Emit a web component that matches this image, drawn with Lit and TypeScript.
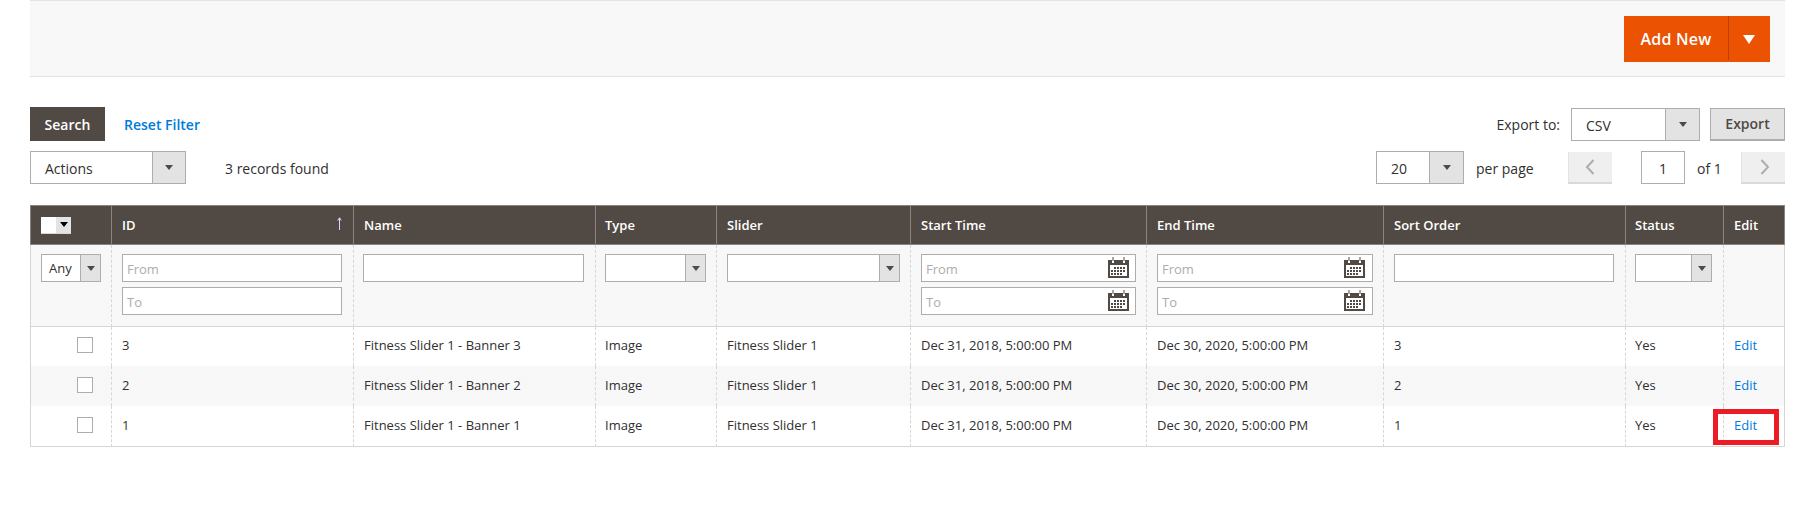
import { LitElement, html, css } from "lit";
import { customElement } from "lit/decorators.js";

const rows = [
  { id: "3", name: "Fitness Slider 1 - Banner 3" },
  { id: "2", name: "Fitness Slider 1 - Banner 2" },
  { id: "1", name: "Fitness Slider 1 - Banner 1" },
];
const colWidths = [81, 242, 242, 121, 194, 236, 237, 242, 98, 62];
const heads = ["", "ID", "Name", "Type", "Slider", "Start Time", "End Time", "Sort Order", "Status", "Edit"];

const sel = (text: string, extra = "") => html`
  <div class="sel ${extra}">
    <span class="sel-val">${text}</span>
    <span class="sel-btn"><i class="tri"></i></span>
  </div>`;

const cal = html`<svg class="cal" viewBox="0 0 21 21" width="21" height="21" aria-hidden="true">
  <path fill="#514943" d="M0 3h21v18H0z" />
  <path fill="#fff" d="M2 8h17v11H2z" />
  <path fill="#fff" d="M4 1h2v5H4zM15 1h2v5h-2z" />
  <path fill="none" stroke="#514943" stroke-width="1" d="M5 0v4M16 0v4" />
  <path fill="#514943" d="M6 10h2v2H6zM9 10h2v2H9zM12 10h2v2h-2zM15 10h2v2h-2zM3 13h2v2H3zM6 13h2v2H6zM9 13h2v2H9zM12 13h2v2h-2zM15 13h2v2h-2zM3 16h2v2H3zM6 16h2v2H6zM9 16h2v2H9zM12 16h2v2h-2z" />
</svg>`;

const dateInput = (ph: string) => html`
  <div class="date"><input class="inp" placeholder=${ph} />${cal}</div>`;

@customElement("app-root")
export class AppRoot extends LitElement {
  static styles = css`
    :host {
      display: block;
      box-sizing: border-box;
      width: 1815px;
      height: 507px;
      padding: 0 30px;
      background: #fff;
      font-family: "Open Sans", sans-serif;
      font-size: 14px;
      color: #303030;
      overflow: hidden;
    }
    * { box-sizing: border-box; }
    .dither {
      background: repeating-conic-gradient(#f6f6f6 0 25%, #f9f9f9 0 50%) 0 0 / 2px 2px;
    }
    .topbar {
      height: 77px;
      border-top: 1px solid #e3e3e3;
      border-bottom: 1px solid #e3e3e3;
      display: flex;
      justify-content: flex-end;
      align-items: flex-start;
      padding: 15px 15px 0 0;
    }
    .add {
      width: 146px;
      height: 46px;
      background: #eb5202;
      color: #fff;
      display: flex;
      align-items: center;
      font-size: 16px;
      font-weight: 600;
    }
    .add-label { width: 104px; text-align: center; letter-spacing: 0.25px; }
    .add-split {
      flex: 1;
      align-self: stretch;
      display: flex;
      align-items: center;
      justify-content: center;
      position: relative;
    }
    .add-split::before {
      content: "";
      position: absolute;
      left: 0; top: 0; bottom: 2px;
      width: 1px;
      background: #b84002;
    }
    .add-tri {
      width: 0; height: 0;
      border-left: 6px solid transparent;
      border-right: 6px solid transparent;
      border-top: 9px solid #fff;
    }
    .bar {
      display: flex;
      align-items: center;
      justify-content: space-between;
    }
    .bar1 { margin-top: 30px; height: 34px; }
    .bar2 { margin-top: 10px; height: 33px; }
    .group { display: flex; align-items: center; }
    .search {
      width: 75px; height: 34px;
      background: #514943;
      color: #fff;
      font-weight: 600;
      display: flex; align-items: center; justify-content: center;
    }
    .reset { margin-left: 19px; color: #007bdb; font-weight: 600; }
    .sel {
      display: flex;
      height: 28px;
      background: #fff;
      border: 1px solid #adadad;
      font-size: 13px;
      width: 100%;
    }
    .sel-val { flex: 1; min-width: 0; padding-left: 7px; line-height: 27px; }
    .sel-btn {
      width: 20px;
      background: #e3e3e3;
      border-left: 1px solid #adadad;
      display: flex; align-items: center; justify-content: center;
    }
    .tri {
      width: 0; height: 0;
      border-left: 4px solid transparent;
      border-right: 4px solid transparent;
      border-top: 5px solid #514943;
    }
    .big { height: 33px; font-size: 14px; }
    .big .sel-val { padding-left: 14px; line-height: 33px; }
    .big .sel-btn { width: 33px; }
    .w-actions { width: 156px; }
    .w-csv { width: 129px; margin-left: 11px; }
    .w-20 { width: 88px; }
    .big.w-20 .sel-btn, .big.w-csv .sel-btn { width: 34px; }
    .found { margin-left: 39px; padding-top: 1px; }
    .export {
      width: 75px; height: 33px;
      margin-left: 10px;
      background: #e3e3e3;
      border: 1px solid #adadad;
      border-bottom-width: 2px;
      font-weight: 600;
      color: #514943;
      display: flex; align-items: center; justify-content: center;
    }
    .perpage { margin-left: 12px; width: 92px; padding-top: 1px; }
    .pg {
      width: 44px; height: 32px;
      margin-top: 1px;
      background: #efefef;
      border-left: 1px solid #e3e3e3;
      border-bottom: 2px solid #d9d9d9;
      display: flex; align-items: center; justify-content: center;
    }
    .pg-prev svg { margin-right: 2px; }
    .pg-next svg { margin-left: 3px; }
    .pg-num {
      width: 44px; height: 33px;
      margin-left: 29px;
      padding-top: 1px;
      border: 1px solid #adadad;
      display: flex; align-items: center; justify-content: center;
    }
    .of { margin-left: 12px; width: 44px; padding-top: 1px; }
    table {
      margin-top: 21px;
      width: 1755px;
      table-layout: fixed;
      border-collapse: separate;
      border-spacing: 0;
      font-size: 13px;
    }
    th {
      height: 40px;
      padding: 0 0 0 10px;
      background: #514943;
      color: #fff;
      text-align: left;
      font-weight: 600;
      border-top: 1px solid #8a837f;
      border-left: 1px solid #8a837f;
      border-bottom: 1px solid #8a837f;
      position: relative;
    }
    th:last-child { border-right: 1px solid #8a837f; }
    th:nth-child(4), th:nth-child(9) { padding-left: 9px; }
    .sort {
      position: absolute;
      right: 11px; top: 11px;
    }
    .hcheck {
      display: flex;
      width: 30px; height: 17px;
      border-bottom: 1px solid #d6d6d6;
    }
    .hcheck-box { width: 15px; background: #fff; }
    .hcheck-btn {
      flex: 1;
      background: #e3e3e3;
      display: flex; align-items: center; justify-content: center;
    }
    .hcheck-btn .tri { border-top-color: #000; border-left-width: 4.5px; border-right-width: 4.5px; }
    .filters td {
      height: 82px;
      vertical-align: top;
      padding: 9px 10px 0 10px;
      border-left: 1px dashed #d6d6d6;
      border-bottom: 1px solid #d6d6d6;
    }
    .filters td:first-child { border-left: 1px solid #d6d6d6; }
    .filters td:last-child { border-right: 1px solid #d6d6d6; }
    .filters td:nth-child(2), .filters td:nth-child(8) { padding-right: 11px; }
    .filters td:nth-child(3), .filters td:nth-child(9) { padding-left: 9px; padding-right: 11px; }
    .filters td:nth-child(4) { padding-left: 9px; }
    .filters td:nth-child(7) .cal { right: 8px; }
    .inp {
      display: block;
      width: 100%;
      height: 28px;
      border: 1px solid #adadad;
      background: #fff;
      padding: 1px 4px 0;
      font: inherit;
      outline: none;
    }
    .inp::placeholder { color: #adadad; opacity: 1; }
    .stack { display: flex; flex-direction: column; gap: 5px; }
    .date { position: relative; }
    .cal { position: absolute; right: 7px; top: 3px; }
    tr.row td {
      height: 40px;
      padding: 0 0 3px 10px;
      border-left: 1px dashed #d6d6d6;
    }
    tr.row td:nth-child(4), tr.row td:nth-child(9) { padding-left: 9px; }
    tr.row:nth-child(2) td { height: 39px; }
    tr.row td:first-child {
      border-left: 1px solid #d6d6d6;
      padding: 11px 0 0;
      vertical-align: top;
    }
    tr.row:nth-child(2) td:first-child { padding-top: 10px; }
    tr.row td:last-child { border-right: 1px solid #d6d6d6; position: relative; }
    tr.row:last-child td { border-bottom: 1px solid #d6d6d6; height: 41px; }
    .cb {
      width: 16px; height: 16px;
      margin-left: 46px;
      background: #fff;
      border: 1px solid #adadad;
    }
    .link { color: #007bdb; }
    .mark {
      position: absolute;
      left: -11px; top: 3px;
      width: 66px; height: 36px;
      border: 5px solid #ed1c24;
    }
  `;

  render() {
    return html`
      <div class="topbar dither">
        <div class="add">
          <span class="add-label">Add New</span>
          <span class="add-split"><i class="add-tri"></i></span>
        </div>
      </div>

      <div class="bar bar1">
        <div class="group">
          <div class="search">Search</div>
          <span class="reset">Reset Filter</span>
        </div>
        <div class="group">
          <span>Export to:</span>
          ${sel("CSV", "big w-csv")}
          <div class="export">Export</div>
        </div>
      </div>

      <div class="bar bar2">
        <div class="group">
          ${sel("Actions", "big w-actions")}
          <span class="found">3 records found</span>
        </div>
        <div class="group">
          ${sel("20", "big w-20")}
          <span class="perpage">per page</span>
          <div class="pg pg-prev">
            <svg width="10" height="16" viewBox="0 0 10 16"><path d="M8.5 1 2 8l6.5 7" fill="none" stroke="#adadad" stroke-width="2" /></svg>
          </div>
          <div class="pg-num">1</div>
          <span class="of">of <span>1</span></span>
          <div class="pg pg-next">
            <svg width="10" height="16" viewBox="0 0 10 16"><path d="M1.5 1 8 8l-6.5 7" fill="none" stroke="#adadad" stroke-width="2" /></svg>
          </div>
        </div>
      </div>

      <table>
        <colgroup>${colWidths.map((w) => html`<col style="width:${w}px" />`)}</colgroup>
        <thead>
          <tr>
            ${heads.map((h, i) =>
              i === 0
                ? html`<th><div class="hcheck"><span class="hcheck-box"></span><span class="hcheck-btn"><i class="tri"></i></span></div></th>`
                : i === 1
                  ? html`<th>${h}<svg class="sort" width="5" height="13" viewBox="0 0 5 13"><path d="M2.5 13V1M.7 3.5 2.5.8l1.8 2.7" fill="none" stroke="#d8d8ff" stroke-width="1" /></svg></th>`
                  : html`<th>${h}</th>`
            )}
          </tr>
        </thead>
        <tbody>
          <tr class="filters dither">
            <td>${sel("Any")}</td>
            <td><div class="stack"><input class="inp" placeholder="From" /><input class="inp" placeholder="To" /></div></td>
            <td><input class="inp" /></td>
            <td>${sel("")}</td>
            <td>${sel("")}</td>
            <td><div class="stack">${dateInput("From")}${dateInput("To")}</div></td>
            <td><div class="stack">${dateInput("From")}${dateInput("To")}</div></td>
            <td><input class="inp" /></td>
            <td>${sel("")}</td>
            <td></td>
          </tr>
          ${rows.map(
            (r, i) => html`
              <tr class="row ${i === 1 ? "dither" : ""}">
                <td><div class="cb"></div></td>
                <td>${r.id}</td>
                <td>${r.name}</td>
                <td>Image</td>
                <td>Fitness Slider 1</td>
                <td>Dec 31, 2018, 5:00:00 PM</td>
                <td>Dec 30, 2020, 5:00:00 PM</td>
                <td>${r.id}</td>
                <td>Yes</td>
                <td>
                  <span class="link">Edit</span>
                  ${i === 2 ? html`<div class="mark"></div>` : ""}
                </td>
              </tr>`
          )}
        </tbody>
      </table>
    `;
  }
}
